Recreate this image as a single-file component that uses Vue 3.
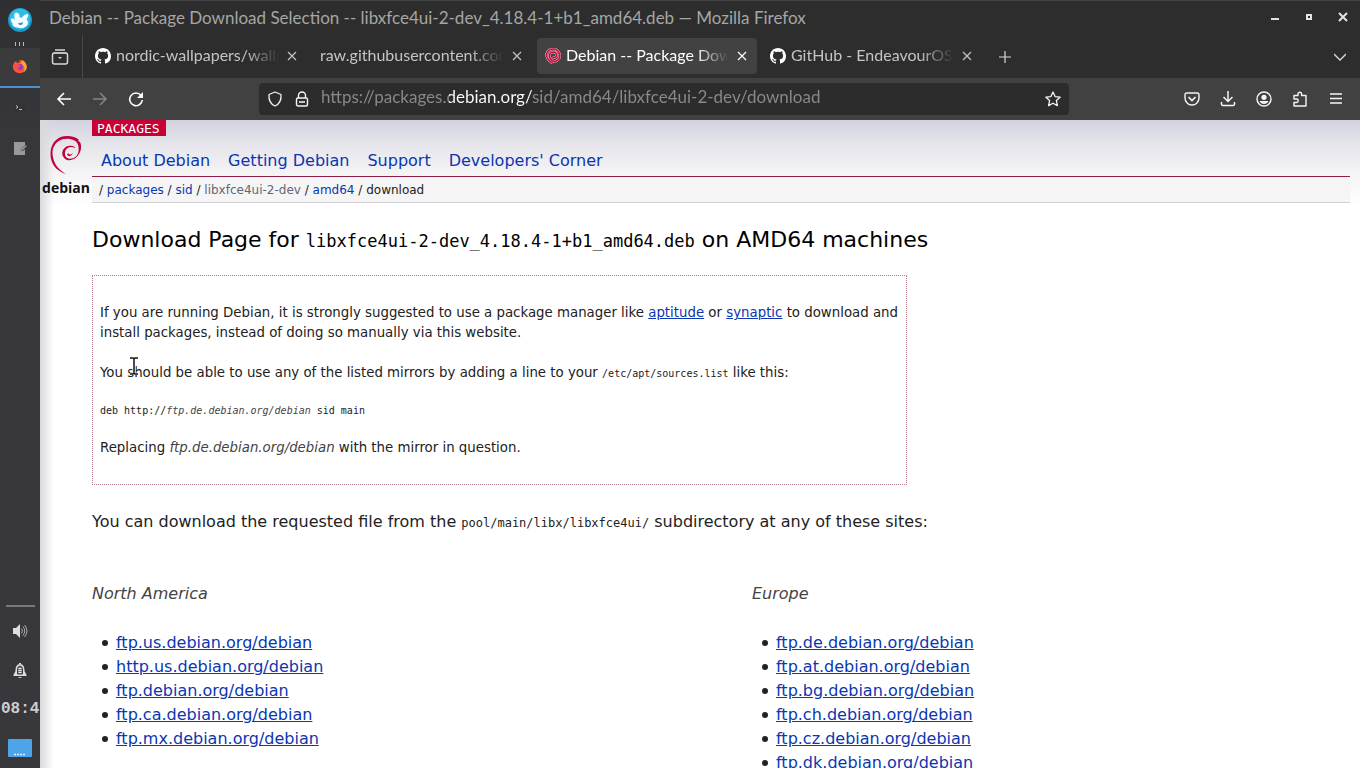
<script setup>
import { ref } from 'vue'

const tabs = [
  { title: 'nordic-wallpapers/wallpapers', icon: 'github' },
  { title: 'raw.githubusercontent.com/', icon: '' },
  { title: 'Debian -- Package Download', icon: 'debian', active: true },
  { title: 'GitHub - EndeavourOS-Team', icon: 'github' },
]
const url = ref('https://packages.debian.org/sid/amd64/libxfce4ui-2-dev/download')
const nav = ['About Debian', 'Getting Debian', 'Support', "Developers' Corner"]
const regions = [
  {
    name: 'North America',
    sites: ['ftp.us.debian.org/debian', 'http.us.debian.org/debian', 'ftp.debian.org/debian', 'ftp.ca.debian.org/debian', 'ftp.mx.debian.org/debian'],
  },
  {
    name: 'Europe',
    sites: ['ftp.de.debian.org/debian', 'ftp.at.debian.org/debian', 'ftp.bg.debian.org/debian', 'ftp.ch.debian.org/debian', 'ftp.cz.debian.org/debian', 'ftp.dk.debian.org/debian'],
  },
]
</script>

<template>
  <div class="desktop">
    <aside class="panel">
      <button class="launcher" aria-label="Applications">
        <svg width="24" height="24" viewBox="0 0 24 24">
          <circle cx="12" cy="12" r="12" fill="#1c97c8" />
          <circle cx="12" cy="11" r="10.500" fill="#2fbbe8" />
          <path d="M3 12q0-3 3-1l1 1q-2-7 1-7.500Q12 5 11.500 9l2 1q3-4 6-4 2 1-1 5 3 4 0 7-4 3.500-9 1.500Q4 19 4.500 15 3 14 3 12z" fill="#f4fcff" />
          <path d="M10 14.500q2 1.500 5-.5-.5 3.500-3 3-1.500-.5-2-2.500z" fill="#2a86b8" />
        </svg>
      </button>
      <svg class="grip" width="12" height="4" viewBox="0 0 12 4"><path d="M1.500 0v4M5.500 0v4M9.500 0v4" stroke="#b8b8bb" /></svg>
      <button class="task running" aria-label="Firefox">
        <svg width="16" height="16" viewBox="0 0 16 16">
          <path d="M2 4l2-2 1 2 3-1-1-2c4 0 8 3 7.500 8A7 7 0 0 1 1 9C1 7 1 5 2 4z" fill="#f4622a" />
          <path d="M10 1c4 2 6 6 4 10l-2 2c1-4 0-7-3-8z" fill="#ffa22e" />
          <circle cx="8" cy="8" r="3" fill="#8b3ccb" />
          <path d="M2 5c2-1 4 0 5 1l2 1-3 2 1 2 4 0-3 2c-4 0-6-3-6-8z" fill="#ff4a45" />
        </svg>
      </button>
      <button class="task" aria-label="Terminal">
        <svg width="16" height="16" viewBox="0 0 16 16"><rect x="2" y="3" width="12" height="9" fill="#323337" /><path d="M4 5.500l2 1.500-2 1.500M7 9.500h3" stroke="#a9c3cb" fill="none" /></svg>
      </button>
      <button class="task" aria-label="Text editor">
        <svg width="16" height="16" viewBox="0 0 16 16"><path d="M2 2h11v4l-4 4v1h2l2-2v6H2z" fill="#98999b" /><path d="M9 9l5-4 1 1-5 5H9z" fill="#98999b" stroke="#4c4c50" stroke-width=".5" /></svg>
      </button>
      <div class="tray">
        <hr class="rule" />
        <button class="tray-btn" aria-label="Volume">
          <svg width="16" height="16" viewBox="0 0 16 16"><path d="M1 5h3l4-4v14l-4-4H1z" fill="#dededf" /><path d="M9.500 5.500q2 2.500 0 5M11 3.500q3.500 4.500 0 9M12.500 2q5 6 0 12" stroke="#a9a9ac" fill="none" /></svg>
        </button>
        <button class="tray-btn" aria-label="Notifications">
          <svg width="16" height="16" viewBox="0 0 16 16"><path d="M8 1c-4 0-4.500 4-4.500 7L1.500 12v1h13v-1l-2-4C12.500 5 12 1 8 1z" fill="#dededf" /><path d="M5.500 11V7q0-4 2.500-4t2.500 4v4z" fill="#77777a" stroke="#3b3a3f" /><path d="M6 14h4q-2 2-4 0M7 0h2v1H7z" fill="#dededf" /><path d="M6.500 5.500h3M6.500 7.500h3M6.500 9.500h3" stroke="#ededee" /></svg>
        </button>
        <div class="clock">08:4</div>
        <button class="tray-btn desk" aria-label="Show desktop">
          <svg width="24" height="18" viewBox="0 0 24 18"><rect width="24" height="18" rx="1" fill="#4ba5e8" /><path d="M6 15.500h12" stroke="#e6f4ff" stroke-width="1.500" stroke-dasharray="2 1" /></svg>
        </button>
      </div>
    </aside>

    <div class="window">
      <header class="titlebar">
        <span class="title">Debian -- Package Download Selection -- libxfce4ui-2-dev_4.18.4-1+b1_amd64.deb — Mozilla Firefox</span>
        <div class="controls">
          <button aria-label="Minimize"><svg width="12" height="12" viewBox="0 0 12 12"><path d="M2 8h8" stroke="#e3e3e3" stroke-width="2" /></svg></button>
          <button aria-label="Maximize"><svg width="12" height="12" viewBox="0 0 12 12"><rect x="4" y="4" width="4" height="4" stroke="#e3e3e3" stroke-width="2" fill="none" /></svg></button>
          <button aria-label="Close"><svg width="12" height="12" viewBox="0 0 12 12"><path d="M2 2l8 8M10 2L2 10" stroke="#e3e3e3" stroke-width="2" /></svg></button>
        </div>
      </header>

      <nav class="tabbar">
        <button class="recent" aria-label="Firefox View">
          <svg width="18" height="16" viewBox="0 0 18 16"><path d="M4 1h10" stroke="#d6d6d6" stroke-width="1.500" /><path d="M2.500 4h13" stroke="#d6d6d6" /><rect x="1.500" y="4" width="15" height="11" rx="2" fill="none" stroke="#d6d6d6" stroke-width="1.500" /><path d="M7 8h4l-2 2z" fill="#d6d6d6" /></svg>
        </button>
        <div v-for="t in tabs" :key="t.title" class="tab" :class="{ active: t.active }">
          <svg v-if="t.icon === 'github'" class="fav" width="16" height="16" viewBox="0 0 16 16"><path fill="#fff" d="M8 0C3.580 0 0 3.580 0 8c0 3.540 2.290 6.530 5.470 7.590.4.070.55-.17.55-.38 0-.19-.01-.82-.01-1.490-2.010.37-2.530-.49-2.690-.94-.09-.23-.48-.94-.82-1.130-.28-.15-.68-.52-.01-.53.63-.01 1.080.58 1.230.82.72 1.210 1.870.87 2.330.66.07-.52.28-.87.51-1.070-1.780-.2-3.640-.89-3.640-3.950 0-.87.31-1.590.82-2.150-.08-.2-.36-1.020.08-2.120 0 0 .67-.21 2.200.82.64-.18 1.320-.27 2-.27s1.360.09 2 .27c1.530-1.040 2.200-.82 2.200-.82.44 1.100.16 1.920.08 2.120.51.56.82 1.270.82 2.150 0 3.070-1.870 3.750-3.650 3.950.29.25.54.73.54 1.480 0 1.070-.01 1.930-.01 2.200 0 .21.15.46.55.38A8.010 8.010 0 0 0 16 8c0-4.420-3.580-8-8-8z" /></svg>
          <svg v-if="t.icon === 'debian'" class="fav" width="16" height="16" viewBox="0 0 16 16"><path d="M8 15.500Q1 11 1.500 6 3 1 8 1t6.500 5-3 7Q6 14 4.500 9 4 4 8.500 4 12 4.500 11.500 8 9 11 7.500 8.500" fill="none" stroke="#eeb7c3" stroke-width="2.500" /><path d="M8 15.500Q1 11 1.500 6 3 1 8 1t6.500 5-3 7Q6 14 4.500 9 4 4 8.500 4 12 4.500 11.500 8 9 11 7.500 8.500" fill="none" stroke="#c40d3c" stroke-width="1.500" /></svg>
          <a class="tab-title" href="#">{{ t.title }}</a>
          <button class="tab-close" aria-label="Close tab"><svg width="10" height="10" viewBox="0 0 10 10"><path d="M1 1l8 8M9 1L1 9" stroke="currentColor" stroke-width="1.200" /></svg></button>
        </div>
        <button class="new-tab" aria-label="New tab"><svg width="12" height="12" viewBox="0 0 12 12"><path d="M6 0v12M0 6h12" stroke="#d9d9d9" stroke-width="1.200" /></svg></button>
        <button class="all-tabs" aria-label="List all tabs"><svg width="12" height="8" viewBox="0 0 12 8"><path d="M0 1l6 6 6-6" stroke="#d9d9d9" stroke-width="1.300" fill="none" /></svg></button>
      </nav>

      <div class="toolbar">
        <div class="history">
          <button aria-label="Back"><svg width="16" height="16" viewBox="0 0 16 16"><path d="M15 8H2M8 2L2 8l6 6" stroke="#fff" stroke-width="1.600" fill="none" /></svg></button>
          <button aria-label="Forward" disabled><svg width="16" height="16" viewBox="0 0 16 16"><path d="M1 8h13M8 2l6 6-6 6" stroke="#858585" stroke-width="1.500" fill="none" /></svg></button>
          <button aria-label="Reload"><svg width="16" height="16" viewBox="0 0 16 16"><path d="M13 4.500A6.300 6.300 0 1 0 14.300 9" stroke="#fff" stroke-width="1.600" fill="none" /><path d="M15 1v6H9z" fill="#fff" /></svg></button>
        </div>
        <div class="urlbar">
          <button aria-label="Tracking protection"><svg width="16" height="16" viewBox="0 0 16 16"><path d="M8 1l6 2.500c.5 6-1.500 9.500-6 11.500-4.500-2-6.500-5.500-6-11.500z" fill="none" stroke="#f5f5f5" stroke-width="1.300" stroke-linejoin="round" /></svg></button>
          <button aria-label="Site information"><svg width="14" height="16" viewBox="0 0 14 16"><rect x="1.500" y="7" width="11" height="8" rx="1.500" fill="none" stroke="#f5f5f5" stroke-width="1.400" /><path d="M3.500 7V4.500a3.500 3.500 0 0 1 7 0V7M4 11h6" fill="none" stroke="#f5f5f5" stroke-width="1.400" /></svg></button>
          <input v-model="url" class="address" type="text" aria-label="Address" spellcheck="false" />
          <button aria-label="Bookmark"><svg width="16" height="16" viewBox="0 0 16 16"><path d="M8 1l2.100 4.600 5 .6-3.700 3.400 1 5L8 12.200l-4.400 2.400 1-5L.9 6.200l5-.6z" fill="none" stroke="#f5f5f5" stroke-width="1.300" stroke-linejoin="round" /></svg></button>
        </div>
        <div class="actions">
          <button aria-label="Pocket"><svg width="16" height="16" viewBox="0 0 16 16"><path d="M3 2h10q2 0 2 2v3a7 7 0 0 1-14 0V4q0-2 2-2z" fill="none" stroke="#f5f5f5" stroke-width="1.400" /><path d="M4.500 6L8 9.500 11.500 6" stroke="#f5f5f5" stroke-width="1.600" fill="none" /></svg></button>
          <button aria-label="Downloads"><svg width="16" height="16" viewBox="0 0 16 16"><path d="M8 0v10M3.500 6L8 10.500 12.500 6M1.500 11v2q0 1.500 1.500 1.500h10q1.500 0 1.500-1.500v-2" stroke="#f5f5f5" stroke-width="1.500" fill="none" /></svg></button>
          <button aria-label="Account"><svg width="16" height="16" viewBox="0 0 16 16"><circle cx="8" cy="8" r="7" fill="none" stroke="#f5f5f5" stroke-width="1.400" /><circle cx="8" cy="6.300" r="2.600" fill="#f5f5f5" /><path d="M3.500 10h9Q11 13 8 13t-4.500-3z" fill="#f5f5f5" /></svg></button>
          <button aria-label="Extensions"><svg width="16" height="16" viewBox="0 0 16 16"><path d="M2 7V4.500h4V3a1.800 1.800 0 0 1 3.600 0v1.500H14V15H2v-3.500h2.500a1.700 1.700 0 0 0 0-3.500H2z" fill="none" stroke="#f5f5f5" stroke-width="1.400" stroke-linejoin="round" /></svg></button>
          <button aria-label="Menu"><svg width="16" height="16" viewBox="0 0 16 16"><path d="M2 3h12M2 7.500h12M2 12h12" stroke="#f5f5f5" stroke-width="1.400" /></svg></button>
        </div>
      </div>

      <main class="page">
        <a class="logo" href="#">
          <svg width="34" height="40" viewBox="0 0 34 40" fill="#c4003a">
            <path d="M17 39C7 36 1 28 1.500 18 2 7 9 1 18 1c5 0 9 1 12 4l-1 1 2 1c2 4 1 9-1 12-3 5-8 7-12 6-4-2-6-6-4-10 2-4 6-5 9-4 2 0 3 1 3 2-4-2-8-1-9.500 2.500-1.500 4 0 7 3 8 5 1 9-2 10-7 1-7-2-12-9-12.500C11 3 5 8 3.500 16 3 26 8 34 17 39z" />
            <path d="M19 18q2 3 5 0-2 5-6 2z" />
          </svg>
          <span>debian</span>
        </a>
        <section class="masthead">
          <a class="badge" href="#">PACKAGES</a>
          <nav class="links"><a v-for="n in nav" :key="n" href="#">{{ n }}</a></nav>
          <p class="crumbs">/ <a href="#">packages</a> / <a href="#">sid</a> / <a class="seen" href="#">libxfce4ui-2-dev</a> / <a href="#">amd64</a> / download</p>
        </section>

        <article class="content">
          <h1>Download Page for <code>libxfce4ui-2-dev_4.18.4-1+b1_amd64.deb</code> on AMD64 machines</h1>
          <div class="note">
            <p>If you are running Debian, it is strongly suggested to use a package manager like <a href="#">aptitude</a> or <a href="#">synaptic</a> to download and install packages, instead of doing so manually via this website.</p>
            <p>You should be able to use any of the listed mirrors by adding a line to your <code>/etc/apt/sources.list</code> like this:</p>
            <pre>deb http://<em>ftp.de.debian.org/debian</em> sid main</pre>
            <p>Replacing <em>ftp.de.debian.org/debian</em> with the mirror in question.</p>
          </div>
          <p class="lead">You can download the requested file from the <code>pool/main/libx/libxfce4ui/</code> subdirectory at any of these sites:</p>
          <div class="mirrors">
            <section v-for="r in regions" :key="r.name">
              <h2>{{ r.name }}</h2>
              <ul><li v-for="s in r.sites" :key="s"><a href="#">{{ s }}</a></li></ul>
            </section>
          </div>
        </article>
        <svg class="pointer" width="10" height="18" viewBox="0 0 10 18"><path d="M1 1h3l1 1 1-1h3M5 2v14M1 17h3l1-1 1 1h3" fill="none" stroke="#fff" stroke-width="3" /><path d="M1 1h3l1 1 1-1h3M5 2v14M1 17h3l1-1 1 1h3" fill="none" stroke="#111" stroke-width="1.500" /></svg>
      </main>
    </div>
  </div>
</template>

<style>
body { margin: 0; }
</style>

<style scoped>
* { box-sizing: border-box; }
button { display: flex; align-items: center; justify-content: center; padding: 0; border: 0; background: none; color: inherit; font: inherit; }
svg { display: block; flex: none; }
p, h1, h2, ul, pre { margin: 0; }

.desktop { display: flex; height: 100vh; overflow: hidden; background: #2d2d2d; }

.panel { display: flex; flex-direction: column; align-items: stretch; width: 40px; flex: none; overflow: hidden; background: linear-gradient(#2f2f31, #37373b 130px, #38373c); }
.launcher { height: 40px; }
.grip { margin: 2px auto 2px 14px; }
.task { height: 40px; }
.running { background: #3b3b3d; border-bottom: 2px solid #4a90cf; }
.tray { display: flex; flex-direction: column; margin-top: auto; }
.rule { width: 29px; height: 2px; margin: 0 auto 4px; border: 0; background: #77797c; }
.tray-btn { height: 40px; }
.clock { height: 36px; padding-left: 1px; overflow: hidden; color: #cfcfd0; font: bold 16px/36px "Liberation Mono", monospace; }
.desk { height: 41px; }

.window { display: flex; flex-direction: column; flex: 1; min-width: 0; font-family: Lato, sans-serif; }
.titlebar { display: flex; align-items: center; justify-content: space-between; height: 35px; flex: none; padding: 0 11px 2px 9px; border-top: 1px solid #434343; color: #a6a6a6; font-size: 17px; }
.title { overflow: hidden; white-space: nowrap; }
.controls { display: flex; gap: 22px; }

.tabbar { display: flex; align-items: stretch; height: 43px; flex: none; color: #c4c4c4; font-size: 16px; }
.recent { width: 43px; padding-right: 2px; margin-right: 4px; border-right: 1px solid #484848; }
.tab { display: flex; align-items: center; width: 220px; min-width: 0; height: 36px; margin: 3px 5px 0 0; padding: 0 10px 1px 8px; border-radius: 4px; }
.active { background: #424242; color: #fff; }
.fav { margin-right: 5px; }
.tab-title { flex: 1; overflow: hidden; white-space: nowrap; color: inherit; text-decoration: none; line-height: 22px; padding-bottom: 2px; mask-image: linear-gradient(to left, transparent, #000 34px); }
.tab-close { margin-left: 8px; }
.new-tab { width: 40px; margin-left: -2px; }
.all-tabs { width: 40px; margin-left: auto; }

.toolbar { display: flex; align-items: center; height: 42px; flex: none; background: #414141; }
.history { display: flex; gap: 20px; width: 219px; padding-left: 16px; }
.urlbar { display: flex; align-items: center; gap: 12px; flex: 1; height: 32px; max-width: 810px; padding: 0 8px; border-radius: 4px; background: #2c2c2c; }
.address { flex: 1; min-width: 0; height: 28px; padding: 0 0 5px; border: 0; outline: 0; font: 17px Lato, sans-serif; background: linear-gradient(to right, #8a8a8a 128px, #fff 128px 211px, #8a8a8a 211px); background-clip: text; -webkit-text-fill-color: transparent; }
.actions { display: flex; gap: 20px; margin-left: auto; padding-right: 16px; }

.page { position: relative; flex: 1; min-height: 0; overflow: hidden; padding: 0 10px 0 52px; color: #222; font: 16px/20px "DejaVu Sans", sans-serif; background: linear-gradient(to right, #d9d9dc, transparent 14px), linear-gradient(#d3d3e0, #e4e4ea 24px, #f3f3f5 50px, #fff 86px) #fff; }
a { color: #0a36b0; }
code, pre { font-family: "DejaVu Sans Mono", monospace; }
code { line-height: 1; }
em { color: #444; }
.logo { position: absolute; left: 2px; top: 15px; display: flex; flex-direction: column; align-items: center; width: 48px; color: #111; font: 700 14px/26px "Open Sans", sans-serif; text-decoration: none; }
.masthead { display: flex; flex-direction: column; }
.badge { align-self: flex-start; height: 16px; padding: 0 6px 0 5px; background: #c70036; color: #fff; font: 13px/17px "DejaVu Sans Mono", monospace; text-decoration: none; }
.links { display: flex; gap: 18px; height: 41px; padding: 0 9px; border-bottom: 1px solid #8c1d45; line-height: 50px; }
.links a, .crumbs a { text-decoration: none; }
.crumbs { height: 26px; padding-left: 7px; border-bottom: 1px solid #d2d2d6; background: #f5f5f6; font-size: 12px; line-height: 27px; }
.crumbs .seen { color: #656572; }

h1 { margin-top: 21px; color: #000; font-size: 22px; font-weight: 400; line-height: 32px; }
h1 code { font-size: 17px; }
.note { max-width: 815px; margin-top: 19px; padding: 27px 7px 26px; border: 1px dotted #b0788a; font-size: smaller; }
.note p + p { margin-top: 20px; }
.note code, .note pre { font-size: 10px; }
.note pre { margin: 18px 0 17px; line-height: 20px; }
.lead { margin-top: 27px; }
.lead code { font-size: 12px; }
.mirrors { display: grid; grid-template-columns: 1fr 1fr; column-gap: 62px; margin-top: 52px; }
h2 { color: #444; font-size: 16px; font-style: italic; font-weight: 400; }
ul { margin-top: 27px; padding-left: 10px; list-style: none; }
li { display: flex; align-items: center; gap: 8px; line-height: 24px; }
li::before { content: ""; width: 6px; height: 6px; border-radius: 50%; background: #222; }
.pointer { position: absolute; left: 89px; top: 237px; }
</style>
